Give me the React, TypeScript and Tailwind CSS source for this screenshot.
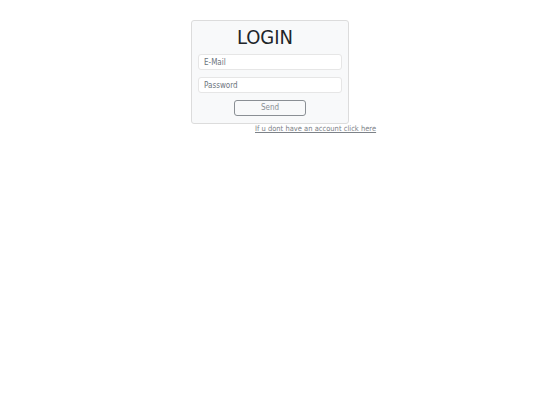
export default function App() {
  return (
    <div
      className="min-h-screen w-full bg-white pt-[20px]"
      style={{ fontFamily: "'DejaVu Sans Condensed', 'DejaVu Sans', sans-serif" }}
    >
      <div className="mx-auto flex w-[158px] flex-col">
        <div className="flex flex-col items-center rounded-[3px] border border-[#dcdcdc] bg-[#f8f9fa] px-[6px] pb-[7px] pt-[3px]">
          <h1 className="mr-[10px] text-[20px] leading-[26px] text-[#212529]">LOGIN</h1>
          <input
            className="mt-[4px] h-[16px] w-full rounded-[3px] border border-[#e6e6e6] bg-white px-[5px] text-[8px] text-[#495057] outline-none placeholder:text-[#6c757d]"
            placeholder="E-Mail"
          />
          <input
            type="password"
            className="mt-[7px] h-[16px] w-full rounded-[3px] border border-[#e6e6e6] bg-white px-[5px] text-[8px] text-[#495057] outline-none placeholder:text-[#6c757d]"
            placeholder="Password"
          />
          <button className="mt-[7px] h-[16px] w-[72px] rounded-[3px] border border-[#8a8f94] bg-transparent text-[8px] text-[#8a8f94]">
            Send
          </button>
        </div>
        <a
          href="#"
          className="ml-[64px] mt-0 whitespace-nowrap text-[7.5px] leading-[9px] text-[#7d8288] underline"
        >
          If u dont have an account click here
        </a>
      </div>
    </div>
  );
}
